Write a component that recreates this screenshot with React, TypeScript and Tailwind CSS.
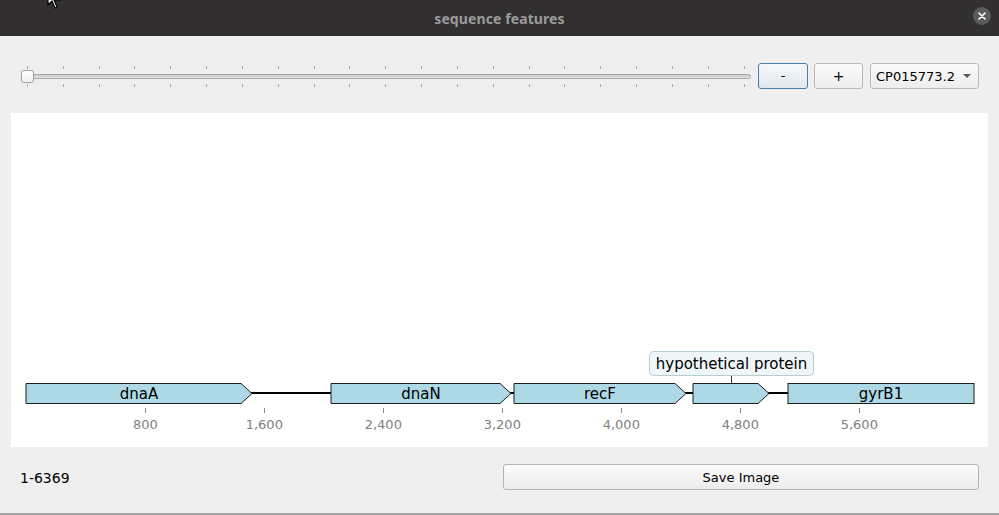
import React from "react";

const PX = 0.14875;
const X0 = 15.3;
const xs = (bp: number) => X0 + bp * PX;

function arrowPath(x1: number, x2: number, y1: number, y2: number, head = 11) {
  const ym = (y1 + y2) / 2;
  return `M${x1},${y1} L${x2 - head},${y1} L${x2},${ym} L${x2 - head},${y2} L${x1},${y2} Z`;
}

const features = [
  { name: "dnaA", x1: 15, x2: 241, arrow: true, label: true },
  { name: "dnaN", x1: 320, x2: 500, arrow: true, label: true },
  { name: "recF", x1: 503, x2: 675, arrow: true, label: true },
  { name: "hyp", x1: 682, x2: 758, arrow: true, label: false },
  { name: "gyrB1", x1: 777, x2: 963, arrow: false, label: true },
];

const axisTicks = [800, 1600, 2400, 3200, 4000, 4800, 5600];

function FeatureMap() {
  return (
    <svg width="978" height="334" viewBox="0 0 978 334" className="block">
      <line x1="15" y1="280" x2="963" y2="280" stroke="#000" strokeWidth="2" />
      {features.map((f) => (
        <g key={f.name}>
          {f.arrow ? (
            <path d={arrowPath(f.x1, f.x2, 270.5, 290.5)} fill="#add8e6" stroke="#1e1e1e" strokeWidth="1" />
          ) : (
            <rect x={f.x1} y={270.5} width={f.x2 - f.x1} height={20} fill="#add8e6" stroke="#1e1e1e" strokeWidth="1" />
          )}
          {f.label && (
            <text
              x={(f.x1 + f.x2) / 2}
              y={285.5}
              textAnchor="middle"
              fontFamily="'DejaVu Sans', sans-serif"
              fontSize="15"
              fill="#000"
            >
              {f.name}
            </text>
          )}
        </g>
      ))}
      <line x1="720.5" y1="262" x2="720.5" y2="270" stroke="#333" strokeWidth="1" />
      <rect x="638.5" y="238.5" width="164" height="24" rx="4" fill="#eef6f8" stroke="#b7cdd4" strokeWidth="1" />
      <text x="720.5" y="255.5" textAnchor="middle" fontFamily="'DejaVu Sans', sans-serif" fontSize="15" fill="#000">
        hypothetical protein
      </text>
      {axisTicks.map((t) => (
        <g key={t}>
          <line x1={Math.round(xs(t)) + 0.5} y1="295" x2={Math.round(xs(t)) + 0.5} y2="300" stroke="#888" strokeWidth="1" />
          <text x={xs(t)} y={316} textAnchor="middle" fontFamily="'DejaVu Sans', sans-serif" fontSize="13" fill="#808080">
            {t.toLocaleString("en-US")}
          </text>
        </g>
      ))}
    </svg>
  );
}

function Slider() {
  const ticks = Array.from({ length: 21 }, (_, i) => 6 + i * 35.83);
  return (
    <div className="relative w-[730px] h-[26px]">
      <svg width="730" height="26" className="absolute left-0 top-0">
        {ticks.map((x, i) => (
          <g key={i}>
            <line x1={Math.round(x) + 0.5} y1="3" x2={Math.round(x) + 0.5} y2="6" stroke="#a8a8a8" strokeWidth="1" />
            <line x1={Math.round(x) + 0.5} y1="21" x2={Math.round(x) + 0.5} y2="24" stroke="#a8a8a8" strokeWidth="1" />
          </g>
        ))}
      </svg>
      <div className="absolute left-[2px] right-0 top-[11px] h-[5px] rounded-[3px] border border-[#a9a9a9] bg-gradient-to-b from-[#c8c8c8] to-[#e4e4e4]" />
      <div className="absolute left-0 top-[7px] w-[13px] h-[13px] rounded-[3px] border border-[#a4a4a4] bg-gradient-to-b from-[#ffffff] to-[#f0f0f0] shadow-[0_0_1px_rgba(0,0,0,0.15)]" />
    </div>
  );
}

export default function App() {
  return (
    <div
      className="relative w-[999px] h-[515px] overflow-hidden bg-[#efefef] flex flex-col"
      style={{ fontFamily: "'DejaVu Sans', sans-serif" }}
    >
      {/* title bar */}
      <div className="h-[36px] shrink-0 bg-[#312f30] flex items-center justify-center relative">
        <span className="text-[14px] font-bold text-[#9b9b9b] font-['Noto_Sans',sans-serif] tracking-[0.1px]">
          sequence features
        </span>
        <div className="absolute right-[8px] top-[7px] w-[18px] h-[18px] rounded-full bg-[#5b595a] flex items-center justify-center">
          <svg width="8" height="8" viewBox="0 0 8 8">
            <path d="M1 1 L7 7 M7 1 L1 7" stroke="#fff" strokeWidth="1.6" strokeLinecap="round" />
          </svg>
        </div>
      </div>

      {/* controls */}
      <div className="mt-[27px] h-[26px] flex items-center pl-[21px]">
        <Slider />
        <button className="ml-[7px] w-[50px] h-[26px] rounded-[3px] border border-[#4c7ba6] bg-gradient-to-b from-[#f7f9fb] to-[#dfe7ed] text-[13px] text-black flex items-center justify-center">
          -
        </button>
        <button className="ml-[6px] w-[49px] h-[26px] rounded-[3px] border border-[#b9b9b9] bg-gradient-to-b from-[#fbfbfb] to-[#ededed] text-[14px] text-black flex items-center justify-center">
          +
        </button>
        <div className="ml-[7px] w-[109px] h-[26px] rounded-[3px] border border-[#b9b9b9] bg-gradient-to-b from-[#fbfbfb] to-[#ededed] flex items-center pl-[5px] pr-[7px]">
          <span className="text-[13px] text-black flex-1 pt-[1px]">CP015773.2</span>
          <svg width="8" height="5" viewBox="0 0 8 5">
            <path d="M0 0 L8 0 L4 4 Z" fill="#5a5a5a" />
          </svg>
        </div>
      </div>

      {/* canvas */}
      <div className="mt-[24px] mx-[11px] h-[334px] bg-white">
        <FeatureMap />
      </div>

      {/* bottom row */}
      <div className="mt-[17px] h-[26px] flex items-center pl-[20px] pr-[20px]">
        <span className="text-[14px] text-black w-[483px] pt-[3px]">1-6369</span>
        <button className="flex-1 h-[26px] rounded-[3px] border border-[#b5b5b5] bg-gradient-to-b from-[#fcfcfc] to-[#ececec] text-[13px] text-black pt-[2px]">
          Save Image
        </button>
      </div>

      <div className="mt-auto h-[2px] bg-[#a3a3a3]" />

      {/* mouse cursor */}
      <svg width="16" height="22" viewBox="0 0 16 22" className="absolute left-[47px] top-[-12px]">
        <path d="M1 1 L1 17 L5 13 L8 20 L10 19 L7 12 L13 12 Z" fill="#fff" stroke="#000" strokeWidth="1.2" strokeLinejoin="round" />
      </svg>
    </div>
  );
}
